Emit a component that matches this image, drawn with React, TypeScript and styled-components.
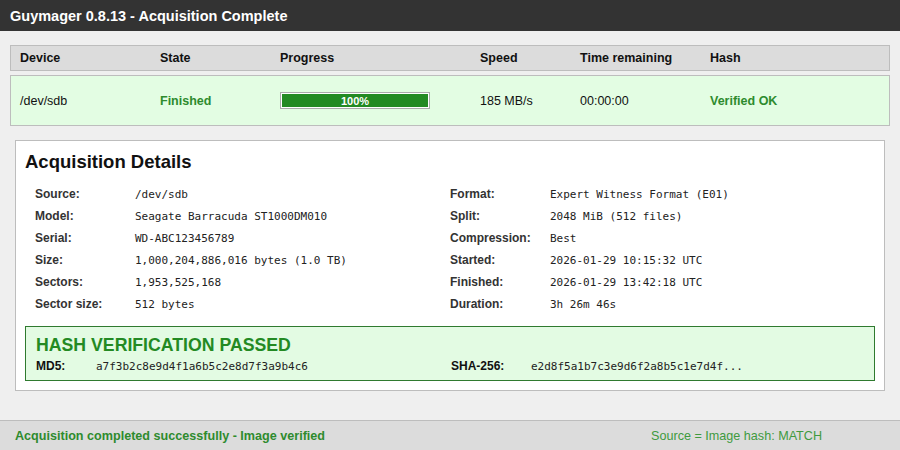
import React from 'react'
import styled, { createGlobalStyle } from 'styled-components'

const GlobalStyle = createGlobalStyle`
  html, body {
    margin: 0;
    padding: 0;
    background: #efefef;
    font-family: 'Liberation Sans', Arial, sans-serif;
    color: #111;
  }
`

const Page = styled.div`
  width: 900px;
  height: 450px;
  display: flex;
  flex-direction: column;
  overflow: hidden;
`

const TitleBar = styled.div`
  height: 31px;
  background: #333333;
  color: #fff;
  font-size: 14.5px;
  font-weight: bold;
  display: flex;
  align-items: center;
  padding-left: 10px;
`

const Main = styled.div`
  flex: 1;
  padding: 14px 10px 0 10px;
  display: flex;
  flex-direction: column;
`

const cols = '140px 120px 200px 100px 130px 1fr'

const HeaderRow = styled.div`
  display: grid;
  grid-template-columns: ${cols};
  height: 24px;
  align-items: center;
  padding-left: 9px;
  background: #dcdcdc;
  border: 1px solid #bdbdbd;
  font-size: 12.5px;
  font-weight: bold;
`

const DeviceRow = styled.div`
  display: grid;
  grid-template-columns: ${cols};
  height: 49px;
  margin-top: 4px;
  align-items: center;
  padding-left: 9px;
  background: #e3fde3;
  border: 1px solid #bdbdbd;
  font-size: 12.5px;
`

const Cell = styled.div<{ $ok?: boolean }>`
  color: ${p => (p.$ok ? '#2e8b2e' : '#111')};
  font-weight: ${p => (p.$ok ? 'bold' : 'normal')};
`

const ProgressOuter = styled.div`
  width: 146px;
  height: 13px;
  border: 1px solid #aaa;
  padding: 1px;
  background: #fff;
`

const ProgressFill = styled.div`
  height: 100%;
  background: #238a23;
  color: #fff;
  font-size: 11px;
  font-weight: bold;
  display: flex;
  align-items: center;
  justify-content: center;
`

const Details = styled.div`
  margin: 14px 5px 0 5px;
  background: #fff;
  border: 1px solid #bdbdbd;
  padding: 9px 9px 9px 9px;
`

const DetailsTitle = styled.div`
  font-size: 18.5px;
  font-weight: bold;
  line-height: 24px;
  margin-bottom: 9px;
`

const InfoGrid = styled.div`
  display: grid;
  grid-template-columns: 415px 1fr;
  padding-left: 10px;
`

const InfoCol = styled.div`
  display: flex;
  flex-direction: column;
`

const InfoRow = styled.div`
  display: grid;
  grid-template-columns: 100px 1fr;
  height: 22px;
  align-items: center;
`

const Label = styled.span`
  font-size: 12px;
  font-weight: bold;
  color: #333;
`

const Mono = styled.span`
  font-family: 'DejaVu Sans Mono', 'Liberation Mono', monospace;
  font-size: 11px;
  color: #222;
`

const HashBox = styled.div`
  margin-top: 11px;
  background: #e3fbe3;
  border: 1px solid #2f7a2f;
  padding: 7px 10px 6px 10px;
`

const HashTitle = styled.div`
  color: #238a23;
  font-size: 17.7px;
  line-height: 22px;
  font-weight: bold;
`

const HashGrid = styled.div`
  display: grid;
  grid-template-columns: 415px 1fr;
  margin-top: 2px;
`

const HashItem = styled.div<{ $labelWidth: number }>`
  display: grid;
  grid-template-columns: ${p => p.$labelWidth}px 1fr;
  height: 16px;
  align-items: center;
`

const HashLabel = styled.span`
  font-size: 12px;
  font-weight: bold;
  color: #111;
`

const StatusBar = styled.div`
  height: 29px;
  background: #dcdcdc;
  border-top: 1px solid #bdbdbd;
  display: flex;
  align-items: center;
  justify-content: space-between;
  padding: 0 78px 0 15px;
  font-size: 12.6px;
  color: #2e8b2e;
`

const StatusLeft = styled.span`
  font-weight: bold;
`

const StatusRight = styled.span`
  color: #3f9a3f;
`

const left = [
  ['Source:', '/dev/sdb'],
  ['Model:', 'Seagate Barracuda ST1000DM010'],
  ['Serial:', 'WD-ABC123456789'],
  ['Size:', '1,000,204,886,016 bytes (1.0 TB)'],
  ['Sectors:', '1,953,525,168'],
  ['Sector size:', '512 bytes']
]

const right = [
  ['Format:', 'Expert Witness Format (E01)'],
  ['Split:', '2048 MiB (512 files)'],
  ['Compression:', 'Best'],
  ['Started:', '2026-01-29 10:15:32 UTC'],
  ['Finished:', '2026-01-29 13:42:18 UTC'],
  ['Duration:', '3h 26m 46s']
]

const App = (): JSX.Element => {
  return (
    <Page>
      <GlobalStyle />
      <TitleBar>Guymager 0.8.13 - Acquisition Complete</TitleBar>
      <Main>
        <HeaderRow>
          <div>Device</div>
          <div>State</div>
          <div>Progress</div>
          <div>Speed</div>
          <div>Time remaining</div>
          <div>Hash</div>
        </HeaderRow>
        <DeviceRow>
          <Cell>/dev/sdb</Cell>
          <Cell $ok>Finished</Cell>
          <div>
            <ProgressOuter>
              <ProgressFill style={{ width: '100%' }}>100%</ProgressFill>
            </ProgressOuter>
          </div>
          <Cell>185 MB/s</Cell>
          <Cell>00:00:00</Cell>
          <Cell $ok>Verified OK</Cell>
        </DeviceRow>
        <Details>
          <DetailsTitle>Acquisition Details</DetailsTitle>
          <InfoGrid>
            <InfoCol>
              {left.map(([k, v]) => (
                <InfoRow key={k}>
                  <Label>{k}</Label>
                  <Mono>{v}</Mono>
                </InfoRow>
              ))}
            </InfoCol>
            <InfoCol>
              {right.map(([k, v]) => (
                <InfoRow key={k}>
                  <Label>{k}</Label>
                  <Mono>{v}</Mono>
                </InfoRow>
              ))}
            </InfoCol>
          </InfoGrid>
          <HashBox>
            <HashTitle>HASH VERIFICATION PASSED</HashTitle>
            <HashGrid>
              <HashItem $labelWidth={60}>
                <HashLabel>MD5:</HashLabel>
                <Mono>a7f3b2c8e9d4f1a6b5c2e8d7f3a9b4c6</Mono>
              </HashItem>
              <HashItem $labelWidth={80}>
                <HashLabel>SHA-256:</HashLabel>
                <Mono>e2d8f5a1b7c3e9d6f2a8b5c1e7d4f...</Mono>
              </HashItem>
            </HashGrid>
          </HashBox>
        </Details>
      </Main>
      <StatusBar>
        <StatusLeft>Acquisition completed successfully - Image verified</StatusLeft>
        <StatusRight>Source = Image hash: MATCH</StatusRight>
      </StatusBar>
    </Page>
  )
}

export default App
